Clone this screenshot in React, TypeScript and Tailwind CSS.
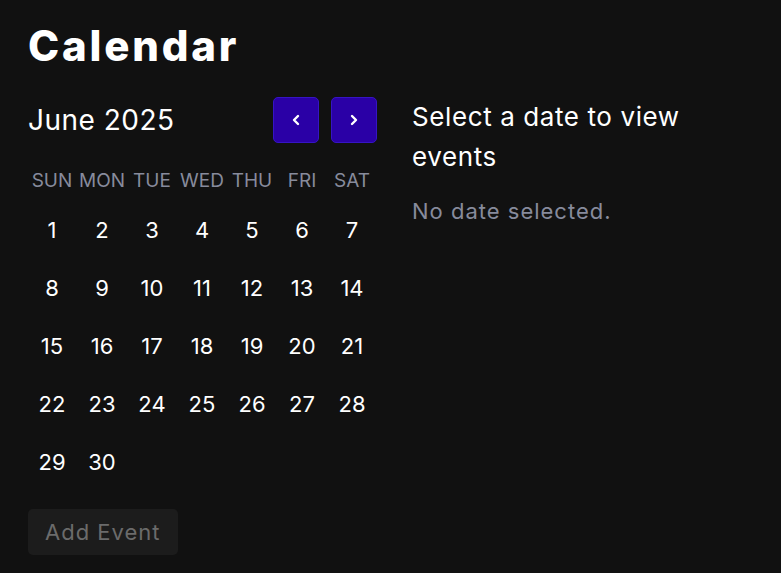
import React from "react";

const days = Array.from({ length: 30 }, (_, i) => i + 1);
const weekdays = ["SUN", "MON", "TUE", "WED", "THU", "FRI", "SAT"];

function Chevron({ dir }: { dir: "left" | "right" }) {
  return (
    <svg width="12" height="14" viewBox="0 0 12 14" fill="none">
      <path
        d={dir === "left" ? "M8 3 L4 7 L8 11" : "M4 3 L8 7 L4 11"}
        stroke="white"
        strokeWidth="2.4"
        strokeLinecap="round"
        strokeLinejoin="round"
      />
    </svg>
  );
}

export default function App() {
  return (
    <div
      className="min-h-screen bg-[#111111] text-white pl-[27px] pr-[28px] pt-[22px]"
      style={{ fontFamily: "Inter, 'Noto Sans', sans-serif" }}
    >
      <h1 className="pl-[1px] text-[42px] leading-[48px] font-extrabold tracking-[2.8px]">Calendar</h1>
      <div className="mt-[27px] flex items-start gap-[35px]">
        <div className="w-[350px]">
          <div className="flex items-center justify-between h-[46px]">
            <div className="pl-[1px] text-[28px] leading-[36px] tracking-[0.5px]">June 2025</div>
            <div className="flex gap-[12px]">
              <button className="w-[46px] h-[46px] rounded-[5px] bg-[#2a00a6] border border-[#3614c4] flex items-center justify-center">
                <Chevron dir="left" />
              </button>
              <button className="w-[46px] h-[46px] rounded-[5px] bg-[#2a00a6] border border-[#3614c4] flex items-center justify-center">
                <Chevron dir="right" />
              </button>
            </div>
          </div>
          <div className="mt-[20px] grid grid-cols-7 h-[36px] items-center text-[19px] text-[#878b9c]">
            {weekdays.map((w) => (
              <div key={w} className="text-center">
                {w}
              </div>
            ))}
          </div>
          <div className="mt-[2px] grid grid-cols-7">
            {days.map((d) => (
              <div key={d} className="h-[58px] flex items-center justify-center text-[22px]">
                {d}
              </div>
            ))}
          </div>
          <button className="ml-[1px] mt-[18px] h-[46px] px-[17px] rounded-[5px] bg-[#1c1c1c] text-[#6b6b6b] text-[22px] tracking-[1px]">
            Add Event
          </button>
        </div>
        <div className="w-[310px]">
          <h2 className="text-[26px] leading-[40px] tracking-[0.6px]">Select a date to view events</h2>
          <p className="mt-[18px] text-[22px] leading-[32px] tracking-[1px] text-[#878b9c]">No date selected.</p>
        </div>
      </div>
    </div>
  );
}
